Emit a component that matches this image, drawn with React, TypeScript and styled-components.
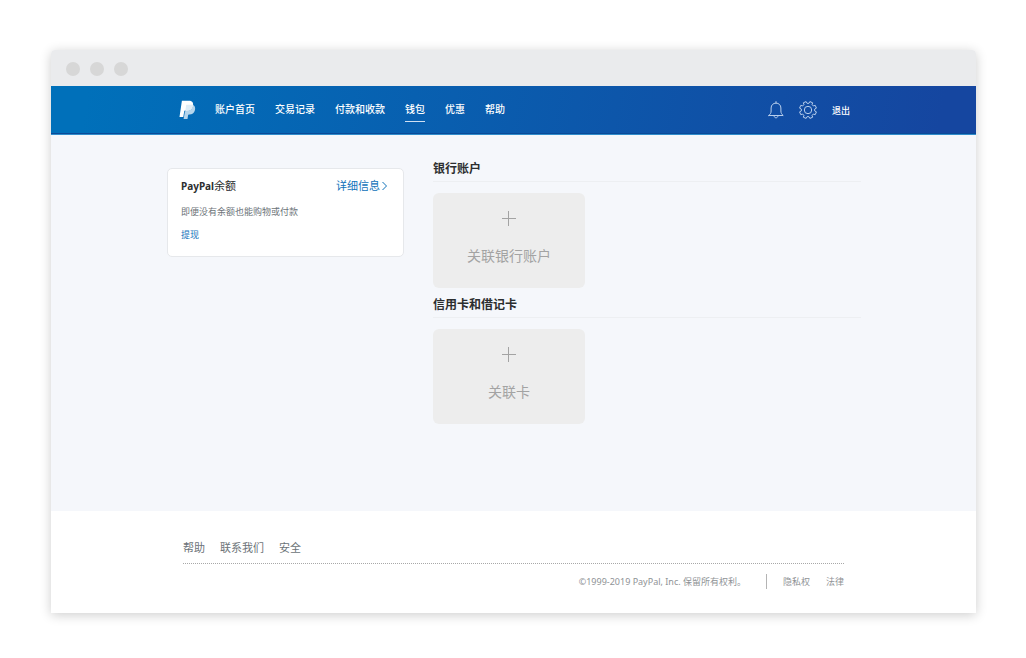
import React from "react";
import styled, { createGlobalStyle } from "styled-components";

const GlobalStyle = createGlobalStyle`
  *, *::before, *::after { box-sizing: border-box; }
  body {
    margin: 0;
    background: #fff;
    font-family: "Noto Sans", "Noto Sans CJK SC", sans-serif;
  }
  a { text-decoration: none; }
`;

const Page = styled.div`
  padding: 50px 50px 45px 51px;
`;

const BrowserWindow = styled.div`
  border-radius: 4px 4px 0 0;
  background: #fff;
  box-shadow: 0 2px 12px rgba(0, 0, 0, 0.2);
`;

const TitleBar = styled.div`
  display: flex;
  align-items: center;
  gap: 10px;
  height: 36px;
  padding: 2px 15px 0;
  border-radius: 4px 4px 0 0;
  background: #eaebed;
`;

const WindowDot = styled.span`
  width: 14px;
  height: 14px;
  border-radius: 50%;
  background: #d7d7d7;
`;

const Header = styled.header`
  display: flex;
  align-items: center;
  justify-content: space-between;
  height: 49px;
  padding: 0 126px 0 128px;
  border-bottom: 1px solid #2f8ccb;
  background: linear-gradient(100deg, #0070ba 4%, #1546a0 96%);
  box-shadow: inset 0 -1px 0 #0a4a98;
`;

const HeaderGroup = styled.div`
  display: flex;
  align-items: center;
`;

const LogoLink = styled.a`
  display: flex;
  margin-right: 19px;
`;

const Nav = styled.nav`
  display: flex;
  gap: 20px;
`;

const NavLink = styled.a<{ $active?: boolean }>`
  padding: 4px 0 5px;
  border-bottom: 1px solid ${(p) => (p.$active ? "#cfe0f3" : "transparent")};
  color: #fff;
  font-size: 10px;
  font-weight: 500;
  line-height: 14px;
`;

const IconButton = styled.button`
  display: flex;
  margin: 0 15px 0 0;
  padding: 0;
  border: 0;
  background: none;
  color: #b9cfec;
  cursor: pointer;
`;

const LogoutLink = styled.a`
  padding-top: 2px;
  color: #fff;
  font-size: 9px;
  font-weight: 500;
  line-height: 14px;
`;

const Main = styled.main`
  display: grid;
  grid-template-columns: 237px 1fr;
  align-items: start;
  gap: 29px;
  min-height: 376px;
  padding: 25px 115px 24px 116px;
  background: #f5f7fb;
`;

const BalanceCard = styled.section`
  margin-top: 8px;
  padding: 9px 15px 14px 13px;
  border: 1px solid #e6e8eb;
  border-radius: 5px;
  background: #fff;
`;

const CardHead = styled.div`
  display: flex;
  align-items: center;
  justify-content: space-between;
`;

const CardTitle = styled.h2`
  margin: 0;
  color: #2c2e2f;
  font-size: 10px;
  font-weight: 700;
  line-height: 16px;
`;

const TitleSuffix = styled.span`
  font-size: 11px;
  font-weight: 400;
`;

const DetailLink = styled.a`
  display: flex;
  align-items: center;
  gap: 1px;
  color: #1072ba;
  font-size: 11px;
  line-height: 16px;
`;

const CardText = styled.p`
  margin: 10px 0 8px;
  color: #6c7378;
  font-size: 9px;
  line-height: 15px;
`;

const CardLink = styled.a`
  display: block;
  color: #1072ba;
  font-size: 9px;
  line-height: 15px;
`;

const Section = styled.section`
  margin-bottom: 8px;
`;

const SectionTitle = styled.h2`
  margin: 0 0 11px;
  padding-bottom: 3px;
  border-bottom: 1px solid #edeff2;
  color: #2c2e2f;
  font-size: 12px;
  font-weight: 700;
  line-height: 18px;
`;

const LinkTile = styled.button`
  display: flex;
  flex-direction: column;
  align-items: center;
  gap: 20px;
  width: 152px;
  height: 95px;
  padding: 18px 0 0;
  border: 0;
  border-radius: 6px;
  background: #ededed;
  color: #a3a3a3;
  font-family: inherit;
  font-size: 14px;
  line-height: 20px;
  cursor: pointer;
`;

const Footer = styled.footer`
  padding: 28px 132px 24px;
`;

const FooterLinks = styled.nav`
  display: flex;
  gap: 15px;
  padding-bottom: 6px;
  border-bottom: 1px dotted #a8a8a8;
`;

const FooterLink = styled.a`
  color: #6c7378;
  font-size: 11px;
  line-height: 18px;
`;

const Legal = styled.div`
  display: flex;
  align-items: center;
  justify-content: flex-end;
  padding-top: 10px;
  color: #8f9396;
  font-size: 9px;
  line-height: 15px;
`;

const Copyright = styled.span`
  padding-right: 20px;
  border-right: 1px solid #b4b4b4;
`;

const LegalLink = styled.a`
  margin-left: 16px;
  color: #8f9396;
`;

const PayPalLogo = () => (
  <svg width="17" height="20" viewBox="0 0 17 20" aria-hidden="true">
    <path d="M2.900.8H9.700c3.400 0 5 1.900 4.300 5.100-.7 3.400-3 4.700-6.200 4.700H6.100c-.5 0-.8.300-.9.800l-.9 5.600H.5z" fill="#fff" />
    <path d="M13.900 4.800c2 1 2.600 2.700 2.100 5.200-.7 3.100-2.900 4.500-5.700 4.500h-.5c-.4 0-.6.300-.7.700l-.6 3.800H4.600l1.300-7.300c.1-.5.400-.8.900-.8h1.300c3.300 0 5.500-1.800 5.800-6.100z" fill="#b5d5ec" />
    <path d="M7.200 4.800h6.700c0 3.700-2.200 6.100-5.800 6.100H6.300z" fill="#dfedf7" />
  </svg>
);

const BellIcon = () => (
  <svg width="16" height="18" viewBox="0 0 16 18" fill="none" stroke="currentColor" strokeLinecap="round" strokeLinejoin="round" aria-hidden="true">
    <path d="M8 .6v1.500M.8 14.500h14.400c-1.500-1.300-2.300-2.400-2.300-4.500V7c0-2.900-2.100-4.900-4.900-4.900S3.100 4.100 3.100 7v3c0 2.100-.8 3.200-2.300 4.500z" />
    <path d="M6 14.800c.2 1.400 1 2 2 2s1.800-.6 2-2" />
  </svg>
);

const GEAR_CENTER = 9;
const GEAR_TEETH = 8;

const gearPath = (() => {
  const point = (radius: number, degrees: number) => {
    const angle = (degrees * Math.PI) / 180;
    const x = GEAR_CENTER + radius * Math.sin(angle);
    const y = GEAR_CENTER - radius * Math.cos(angle);
    return `${x.toFixed(2)} ${y.toFixed(2)}`;
  };
  const points: string[] = [];
  for (let i = 0; i < GEAR_TEETH; i += 1) {
    const middle = ((i + 0.5) * 360) / GEAR_TEETH;
    points.push(point(6.7, middle - 15), point(8.6, middle - 10), point(8.6, middle + 10), point(6.7, middle + 15));
  }
  return `M${points.join("L")}Z`;
})();

const GearIcon = () => (
  <svg width="18" height="18" viewBox="0 0 18 18" fill="none" stroke="currentColor" strokeLinejoin="round" aria-hidden="true">
    <path d={gearPath} />
    <circle cx="9" cy="9" r="3.700" />
  </svg>
);

const ChevronIcon = () => (
  <svg width="7" height="10" viewBox="0 0 7 10" fill="none" stroke="currentColor" aria-hidden="true">
    <path d="M1.500 1l4 4-4 4" />
  </svg>
);

const PlusIcon = () => (
  <svg width="16" height="15" viewBox="0 0 16 15" fill="none" stroke="currentColor" aria-hidden="true">
    <path d="M7.500 0v15M1 7.500h14" />
  </svg>
);

const navItems = ["账户首页", "交易记录", "付款和收款", "钱包", "优惠", "帮助"];
const activeItem = "钱包";
const footerItems = ["帮助", "联系我们", "安全"];
const legalItems = ["隐私权", "法律"];
const accountSections = [
  { title: "银行账户", action: "关联银行账户" },
  { title: "信用卡和借记卡", action: "关联卡" },
];

export default function App() {
  return (
    <>
      <GlobalStyle />
      <Page lang="zh-CN">
        <BrowserWindow>
          <TitleBar>
            <WindowDot />
            <WindowDot />
            <WindowDot />
          </TitleBar>
          <Header>
            <HeaderGroup>
              <LogoLink href="#" aria-label="PayPal">
                <PayPalLogo />
              </LogoLink>
              <Nav>
                {navItems.map((item) => (
                  <NavLink key={item} href="#" $active={item === activeItem}>
                    {item}
                  </NavLink>
                ))}
              </Nav>
            </HeaderGroup>
            <HeaderGroup>
              <IconButton type="button" aria-label="通知">
                <BellIcon />
              </IconButton>
              <IconButton type="button" aria-label="设置">
                <GearIcon />
              </IconButton>
              <LogoutLink href="#">退出</LogoutLink>
            </HeaderGroup>
          </Header>
          <Main>
            <BalanceCard>
              <CardHead>
                <CardTitle>
                  PayPal<TitleSuffix>余额</TitleSuffix>
                </CardTitle>
                <DetailLink href="#">
                  详细信息
                  <ChevronIcon />
                </DetailLink>
              </CardHead>
              <CardText>即便没有余额也能购物或付款</CardText>
              <CardLink href="#">提现</CardLink>
            </BalanceCard>
            <div>
              {accountSections.map((section) => (
                <Section key={section.title}>
                  <SectionTitle>{section.title}</SectionTitle>
                  <LinkTile type="button">
                    <PlusIcon />
                    {section.action}
                  </LinkTile>
                </Section>
              ))}
            </div>
          </Main>
          <Footer>
            <FooterLinks>
              {footerItems.map((item) => (
                <FooterLink key={item} href="#">
                  {item}
                </FooterLink>
              ))}
            </FooterLinks>
            <Legal>
              <Copyright>©1999-2019 PayPal, Inc. 保留所有权利。</Copyright>
              {legalItems.map((item) => (
                <LegalLink key={item} href="#">
                  {item}
                </LegalLink>
              ))}
            </Legal>
          </Footer>
        </BrowserWindow>
      </Page>
    </>
  );
}
